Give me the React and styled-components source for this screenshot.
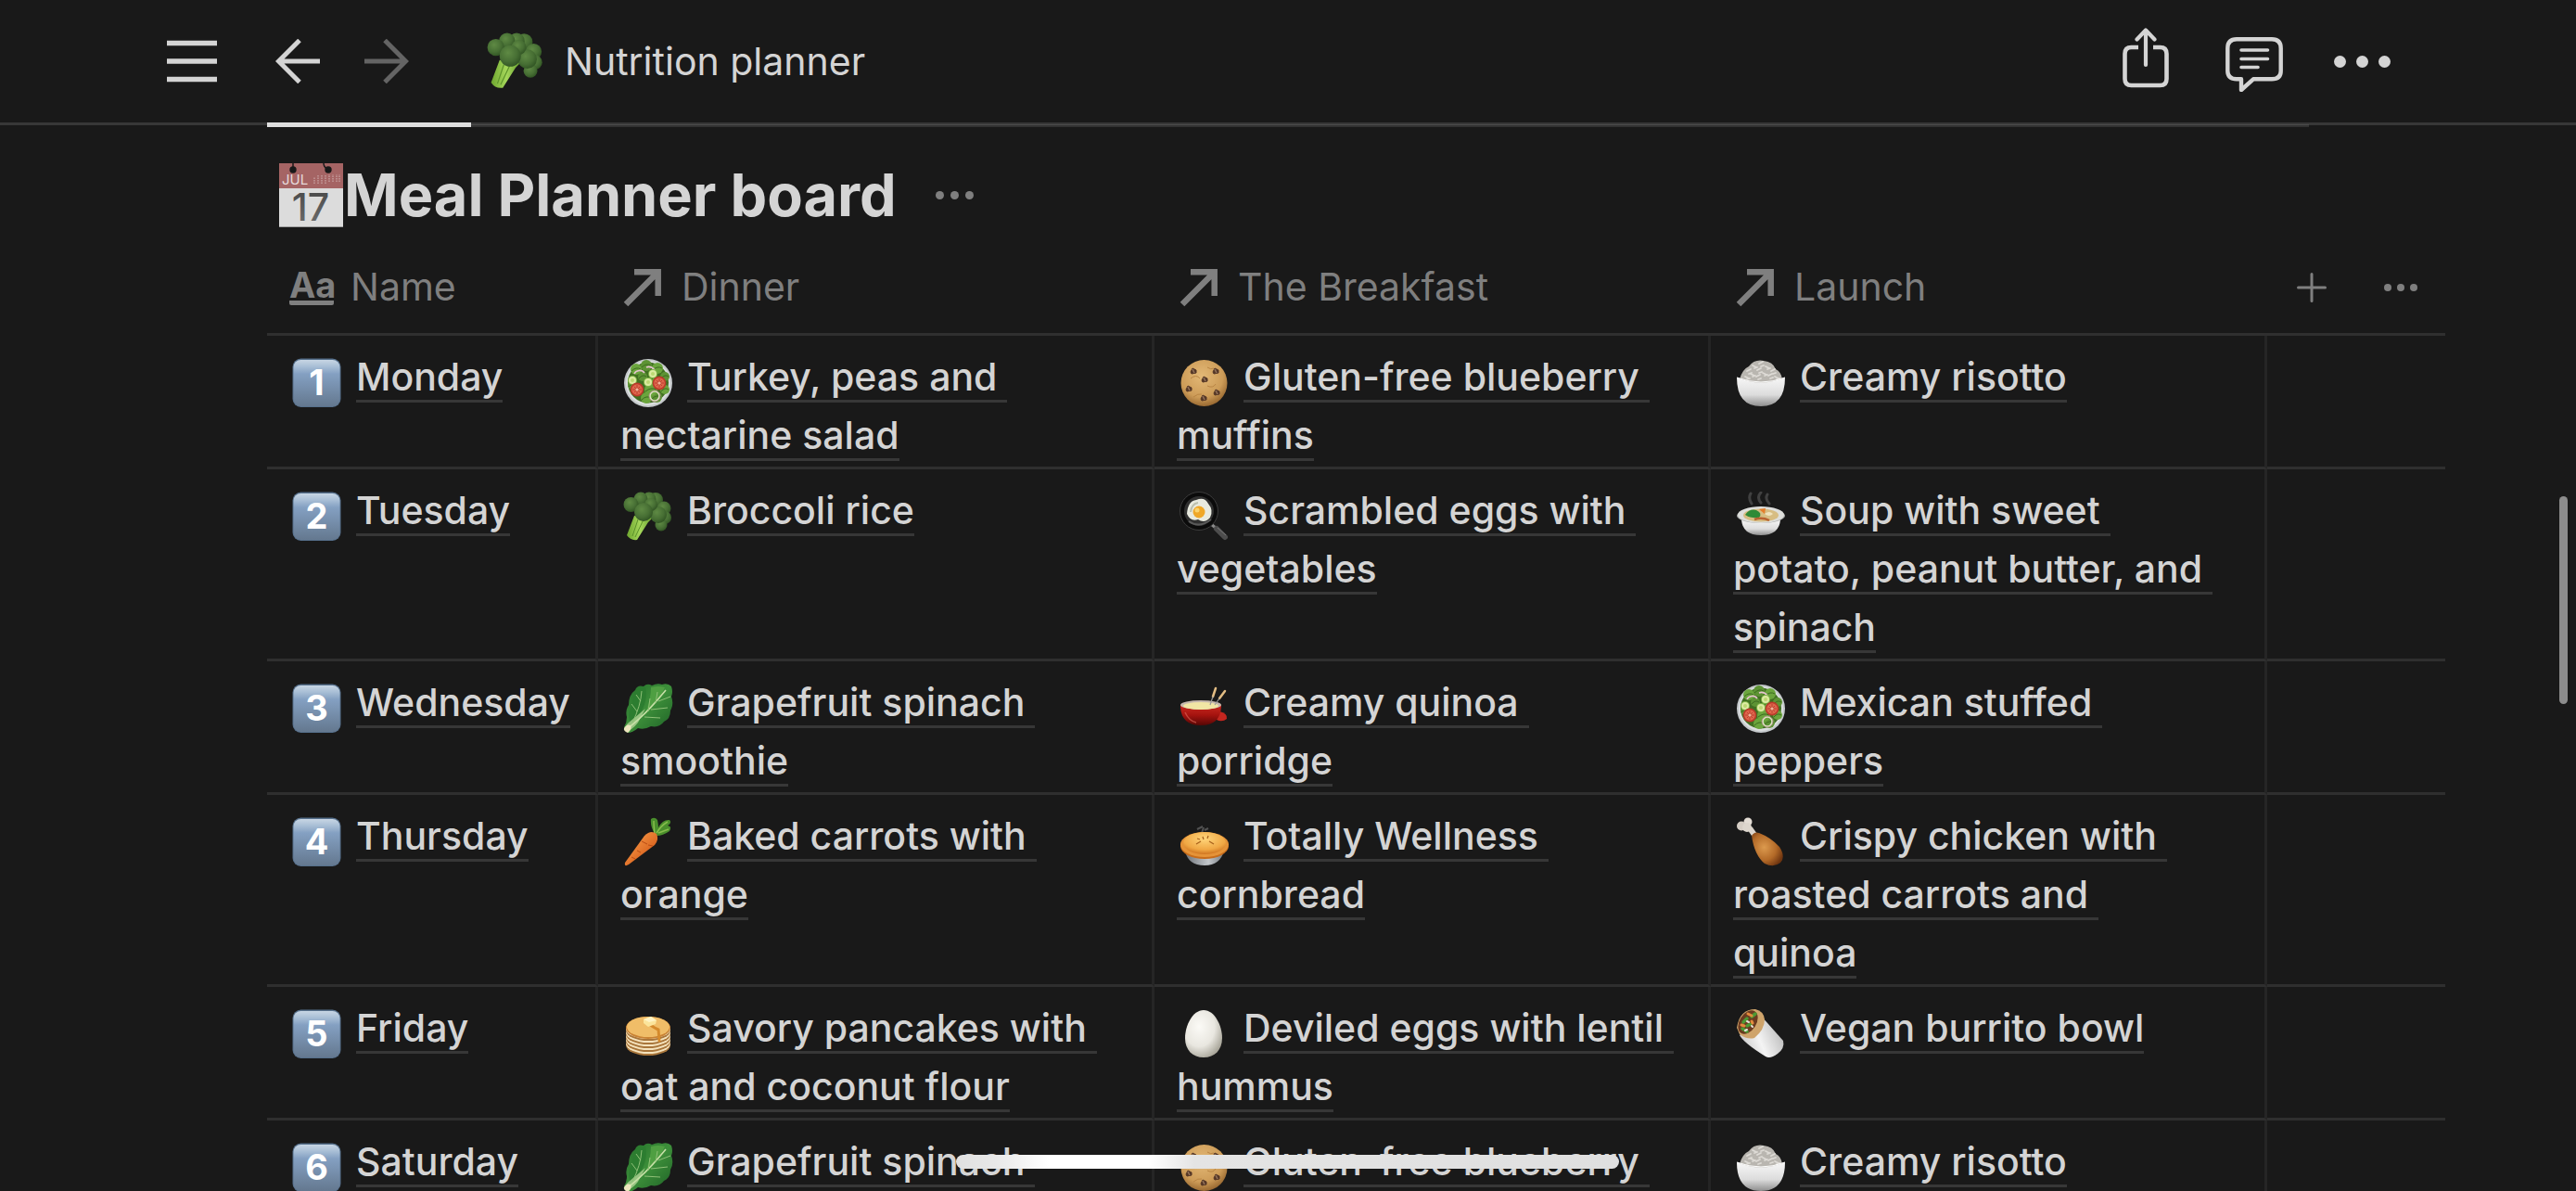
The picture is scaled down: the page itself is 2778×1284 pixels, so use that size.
import React from "react";
import styled, { createGlobalStyle } from "styled-components";

const GlobalStyle = createGlobalStyle`
  * { box-sizing: border-box; }
  html, body { margin: 0; padding: 0; background: #191919; }
`;

const Screen = styled.div`
  position: relative;
  display: flex;
  flex-direction: column;
  height: 100vh;
  overflow: hidden;
  background: #191919;
  color: #d4d4d4;
  font-family: Inter, "Liberation Sans", sans-serif;
  font-size: 41px;
  line-height: 63px;
`;

/* ---------- top bar ---------- */

const TopBar = styled.header`
  position: relative;
  flex: none;
  display: flex;
  align-items: center;
  justify-content: space-between;
  height: 135px;
  padding: 0 172px 0 171px;
  border-bottom: 3px solid #373737;
`;

const BarGroup = styled.div`
  display: flex;
  align-items: center;
`;

const IconButton = styled.button`
  display: flex;
  align-items: center;
  justify-content: center;
  width: ${(p) => p.$width || 72}px;
  height: 96px;
  padding: 0;
  border: 0;
  background: none;
  color: ${(p) => p.$color || "#d4d4d4"};
`;

const NavButtons = styled.nav`
  display: flex;
  gap: 24px;
  margin-left: 42px;
`;

const PageLink = styled.a`
  display: flex;
  align-items: center;
  gap: 22px;
  margin-left: 72px;
  color: inherit;
  text-decoration: none;
`;

const ScrollTrack = styled.div`
  position: absolute;
  left: 288px;
  right: 288px;
  bottom: -5px;
  height: 3px;
  background: rgba(255, 255, 255, 0.11);
`;

const ScrollThumb = styled.div`
  position: absolute;
  left: 0;
  bottom: 0;
  width: 10%;
  height: 5px;
  background: #dedede;
`;

/* ---------- board ---------- */

const Content = styled.main`
  flex: 1;
  min-height: 0;
  overflow: hidden;
  padding: 25px 141px 0 288px;
`;

const TitleRow = styled.div`
  display: flex;
  align-items: center;
  height: 100px;
  padding-left: 12px;
`;

const Title = styled.h2`
  display: flex;
  align-items: center;
  margin: 0;
  font-size: 63px;
  line-height: 96px;
  font-weight: 700;
`;

const Board = styled.table`
  width: 100%;
  table-layout: fixed;
  border-collapse: separate;
  border-spacing: 0;
`;

const HeadCell = styled.th`
  height: 102px;
  padding: 0 0 0 24px;
  border-bottom: 3px solid #2f2f2f;
  color: #7f7f7f;
  font-weight: 400;
  text-align: left;
  vertical-align: middle;
`;

const HeadLabel = styled.div`
  display: flex;
  align-items: center;
  gap: 18px;
`;

const HeadActions = styled.div`
  display: flex;
  gap: 36px;
`;

const TypeGlyph = styled.span`
  width: 48px;
  height: 39px;
  border-bottom: 5px solid currentColor;
  border-radius: 2px;
  font-size: 38px;
  line-height: 34px;
  font-weight: 700;
  text-align: center;
`;

const Cell = styled.td`
  padding: 13px 48px 2px 24px;
  border-bottom: 3px solid #2f2f2f;
  border-right: ${(p) => (p.$last ? "0" : "3px solid #252525")};
  vertical-align: top;
  white-space: pre-wrap;
`;

const NameCell = styled(Cell)`
  padding-right: 0;
`;

const ItemLink = styled.a`
  border-bottom: 3px solid #373737;
  color: inherit;
  font-weight: 500;
  text-decoration: none;
`;

const CellIcon = styled.svg`
  display: inline-block;
  width: 54px;
  height: 54px;
  margin: 0 15px -19px 3px;
`;

const PageIcon = styled.svg`
  width: 62px;
  height: 62px;
`;

/* ---------- overlays ---------- */

const PageScrollbar = styled.div`
  position: absolute;
  right: 9px;
  top: 535px;
  width: 9px;
  height: 224px;
  border-radius: 5px;
  background: #8c8c8c;
`;

const HomeIndicator = styled.div`
  position: absolute;
  left: 50%;
  bottom: 24px;
  width: 715px;
  height: 15px;
  margin-left: -358px;
  border-radius: 8px;
  background: linear-gradient(90deg, #e0e0e0 0%, #e8e8e8 6%, #ffffff 14%, #ffffff 29%, #e4e4e4 36%, #dfdfdf 100%);
`;

/* ---------- emoji drawings ---------- */

const Defs = styled.svg`
  position: absolute;
  width: 0;
  height: 0;
`;

const Gradients = () => (
  <Defs aria-hidden="true">
    <defs>
      <linearGradient id="key" x1="0" y1="0" x2="0" y2="1">
        <stop offset="0" stopColor="#c8d6e4" />
        <stop offset="0.14" stopColor="#a9bfd6" />
        <stop offset="0.3" stopColor="#84a0c2" />
        <stop offset="1" stopColor="#64788f" />
      </linearGradient>
      <radialGradient id="floret" cx="0.4" cy="0.35" r="0.7">
        <stop offset="0" stopColor="#5f8a44" />
        <stop offset="0.6" stopColor="#476f34" />
        <stop offset="1" stopColor="#2f5222" />
      </radialGradient>
      <linearGradient id="stem" x1="0" y1="0" x2="1" y2="0">
        <stop offset="0" stopColor="#6ea62f" />
        <stop offset="0.5" stopColor="#a5d75a" />
        <stop offset="1" stopColor="#5f9a2b" />
      </linearGradient>
      <radialGradient id="cookie" cx="0.45" cy="0.35" r="0.65">
        <stop offset="0" stopColor="#e3b876" />
        <stop offset="0.7" stopColor="#cd9c58" />
        <stop offset="1" stopColor="#9a6a32" />
      </radialGradient>
      <linearGradient id="bowl" x1="0" y1="0" x2="0" y2="1">
        <stop offset="0" stopColor="#f7f7f7" />
        <stop offset="0.6" stopColor="#dcdcdc" />
        <stop offset="1" stopColor="#8e8e8e" />
      </linearGradient>
      <linearGradient id="leaf" x1="0" y1="0" x2="1" y2="1">
        <stop offset="0" stopColor="#246f2b" />
        <stop offset="0.5" stopColor="#3d8f3a" />
        <stop offset="1" stopColor="#1c5f25" />
      </linearGradient>
      <linearGradient id="pot" x1="0" y1="0" x2="0" y2="1">
        <stop offset="0" stopColor="#c92a20" />
        <stop offset="0.5" stopColor="#a5130f" />
        <stop offset="1" stopColor="#560705" />
      </linearGradient>
      <linearGradient id="carrot" x1="0" y1="0" x2="1" y2="1">
        <stop offset="0.3" stopColor="#f08b3c" />
        <stop offset="0.75" stopColor="#d65f1c" />
      </linearGradient>
      <radialGradient id="crust" cx="0.5" cy="0.3" r="0.7">
        <stop offset="0" stopColor="#ffd57a" />
        <stop offset="0.7" stopColor="#f0a844" />
        <stop offset="1" stopColor="#cf7420" />
      </radialGradient>
      <linearGradient id="tin" x1="0" y1="0" x2="1" y2="0">
        <stop offset="0" stopColor="#6d7278" />
        <stop offset="0.6" stopColor="#c3c7cb" />
        <stop offset="1" stopColor="#74797e" />
      </linearGradient>
      <radialGradient id="egg" cx="0.38" cy="0.35" r="0.7">
        <stop offset="0" stopColor="#fbfaf6" />
        <stop offset="0.6" stopColor="#e9e7e0" />
        <stop offset="1" stopColor="#a9a69a" />
      </radialGradient>
      <radialGradient id="meat" cx="0.4" cy="0.45" r="0.65">
        <stop offset="0" stopColor="#dc9a4e" />
        <stop offset="0.6" stopColor="#b36a28" />
        <stop offset="1" stopColor="#6f3510" />
      </radialGradient>
      <linearGradient id="wrap" x1="0" y1="0.6" x2="1" y2="0.2">
        <stop offset="0" stopColor="#c9c9c9" />
        <stop offset="0.4" stopColor="#f4f4f4" />
        <stop offset="1" stopColor="#b2b2b2" />
      </linearGradient>
      <linearGradient id="numeral" x1="0" y1="0" x2="0" y2="1">
        <stop offset="0" stopColor="#444444" />
        <stop offset="1" stopColor="#707070" />
      </linearGradient>
    </defs>
  </Defs>
);

const Broccoli = () => (
  <g>
    <path d="M12 26 L4 47 Q8 53 15 52 L27 33 L33 27 Z" fill="url(#stem)" />
    <path d="M16 30 L10 48 M22 30 L13 49" stroke="#5b922a" strokeWidth="1" />
    <circle cx="35" cy="9" r="8" fill="url(#floret)" />
    <circle cx="28" cy="8" r="7.5" fill="url(#floret)" />
    <circle cx="19" cy="8" r="7.5" fill="url(#floret)" />
    <circle cx="44" cy="18" r="7.5" fill="url(#floret)" />
    <circle cx="45" cy="28" r="7" fill="url(#floret)" />
    <circle cx="41" cy="36" r="6.5" fill="url(#floret)" />
    <circle cx="38" cy="25" r="9" fill="url(#floret)" />
    <circle cx="30" cy="14" r="7" fill="url(#floret)" />
    <circle cx="8.500" cy="14" r="8" fill="url(#floret)" />
    <circle cx="22" cy="22" r="10" fill="url(#floret)" />
  </g>
);

const Tomato = ({ x, y }) => (
  <g transform={`translate(${x} ${y})`}>
    <circle r="7.4" fill="#b93a2a" />
    <circle r="5.8" fill="#e0654c" />
    <path d="M0 -5 V5 M-5 0 H5 M-3 -3 L3 3 M3 -3 L-3 3" stroke="#b94331" strokeWidth="1" />
    <circle r="1.6" fill="#f0b49b" />
  </g>
);

const Salad = () => (
  <g>
    <circle cx="27" cy="27" r="26" fill="#c5c9cb" />
    <circle cx="27" cy="27" r="24" fill="#dcdfdf" />
    <circle cx="27" cy="26.500" r="22" fill="#416f22" />
    {[[14, 12, 6], [25, 8, 6], [37, 11, 6], [45, 20, 5], [45, 34, 5], [36, 42, 6], [25, 43, 6], [10, 29, 5], [30, 34, 7], [21, 20, 5], [33, 22, 4]].map(([x, y, r], i) => (
      <g key={i}>
        <circle cx={x} cy={y} r={r} fill={i % 2 ? "#5d9334" : "#6ba53d"} />
        <path d={`M${x - r + 1} ${y + 2} Q${x} ${y - 3} ${x + r - 1} ${y}`} stroke="#3d6b20" fill="none" strokeWidth="1" />
      </g>
    ))}
    <path d="M12 17 A6 5 0 0 1 23 16" fill="none" stroke="#e6c3cf" strokeWidth="1.600" />
    <path d="M25 10 Q30 8 34 13" fill="none" stroke="#e6c3cf" strokeWidth="1.600" />
    {[[10, 24], [27, 26], [32, 17]].map(([x, y]) => (
      <g key={x}>
        <circle cx={x} cy={y} r="5" fill="#7fb547" />
        <circle cx={x} cy={y} r="4" fill="#dceba2" />
        <circle cx={x} cy={y} r="2" fill="#bcd873" />
      </g>
    ))}
    <Tomato x={15} y={34} />
    <Tomato x={39} y={27} />
    <circle cx="34" cy="41" r="5" fill="none" stroke="#dfe3c4" strokeWidth="1.600" />
    <circle cx="34" cy="41" r="6" fill="none" stroke="#c98ba3" strokeWidth="0.6" />
  </g>
);

const Cookie = () => (
  <g>
    <circle cx="26.500" cy="27" r="25" fill="url(#cookie)" />
    <path d="M12 22 q6 -5 10 0 M30 30 q6 3 9 -2 M15 42 q5 -4 9 -3 M30 10 q4 3 7 1" stroke="#b98544" strokeWidth="1" fill="none" />
    {[[15, 14], [39, 14], [27, 23], [10, 33], [40, 37], [26, 43]].map(([x, y]) => (
      <g key={`${x}-${y}`}>
        <path d={`M${x - 3} ${y + 1} L${x - 1} ${y - 3} L${x + 3} ${y - 1} L${x + 3} ${y + 2} L${x - 2} ${y + 3} Z`} fill="#553726" strokeLinejoin="round" stroke="#553726" />
        <path d={`M${x - 1} ${y - 2} L${x + 1} ${y + 2}`} stroke="#93725a" strokeWidth="1.5" />
      </g>
    ))}
  </g>
);

const Pan = () => (
  <g>
    <path d="M34 35 L40 40" stroke="#8a8a8a" strokeWidth="3" />
    <path d="M40 40 L49 49" stroke="#4d4d4d" strokeWidth="6" strokeLinecap="round" />
    <path d="M41 39 L50 47" stroke="#787878" strokeWidth="1" />
    <circle cx="21" cy="21" r="20.500" fill="#0b0b0b" stroke="#3c3c3c" strokeWidth="1" />
    <circle cx="21" cy="21" r="16" fill="#303030" />
    <path d="M10 32 Q21 40 34 30" fill="none" stroke="#5a5a5a" strokeWidth="2" />
    <path d="M8 24 Q9 10 18 9 Q27 5 31 13 Q37 20 33 28 Q27 35 20 30 Q12 33 8 24 Z" fill="#e8eadf" />
    <path d="M12 22 Q13 13 20 12" stroke="#bcc0ae" fill="none" strokeWidth="2" />
    <circle cx="21" cy="22" r="6.500" fill="#efa727" />
    <circle cx="19" cy="20" r="2.500" fill="#fbd36c" />
  </g>
);

const Fondue = () => (
  <g>
    <path d="M43 30 Q52 32 51 38 Q46 42 40 39 Z" fill="#c3261f" />
    <path d="M1 23 Q1 45 23 45 Q45 45 45 23 Z" fill="url(#pot)" />
    <ellipse cx="23" cy="23" rx="22" ry="5" fill="#c7b9ae" />
    <ellipse cx="23" cy="24" rx="19" ry="4" fill="#f1e6a4" />
    <path d="M39 5 L36 14 M49 8 L43 16" stroke="#e3bd84" strokeWidth="2.500" strokeLinecap="round" />
    <path d="M36 14 L33 23 M43 16 L38 23" stroke="#9a9a9a" strokeWidth="1.200" />
    <path d="M6 31 Q10 40 18 42" stroke="#e0695c" strokeWidth="1.500" fill="none" opacity="0.6" />
  </g>
);

const Rice = () => (
  <g>
    <path d="M4 23 Q7 12 14 9 Q20 1 30 3 Q40 4 43 12 Q49 15 50 23 Q27 34 4 23 Z" fill="#b9b6b0" />
    {[[14, 14], [20, 8], [27, 6], [34, 9], [40, 14], [18, 17], [25, 13], [31, 16], [37, 19], [12, 20], [24, 20], [44, 20]].map(([x, y], i) => (
      <path key={i} d={`M${x - 2} ${y} l4 ${i % 2 ? 2 : -2} M${x} ${y + 3} l3 -1`} stroke="#dedbd6" strokeWidth="1.800" strokeLinecap="round" />
    ))}
    <path d="M1 21 Q27 32 53 21 Q53 52 27 52 Q1 52 1 21 Z" fill="url(#bowl)" />
    <path d="M1 21 Q27 31 53 21" stroke="#ffffff" strokeWidth="1" fill="none" />
  </g>
);

const Soup = () => (
  <g>
    <path d="M17 13 Q13 7 16 2 M27 12 Q22 6 27 1 M36 13 Q31 8 34 3" stroke="#8d8d8d" strokeWidth="3" fill="none" strokeLinecap="round" opacity="0.35" />
    <path d="M6 30 Q7 47 27 47 Q47 47 48 30 Z" fill="url(#bowl)" />
    <ellipse cx="27" cy="26" rx="26" ry="8" fill="#aeb0ae" />
    <ellipse cx="27" cy="25" rx="25" ry="9" fill="#dedfdc" />
    <ellipse cx="27" cy="25.500" rx="19" ry="7" fill="#d7bd82" />
    <path d="M10 25 Q15 18 22 20 Q29 23 25 28 Q16 29 10 25 Z" fill="#2f8a36" />
    <path d="M25 19 L32 18 L31 24 Z" fill="#e57e2b" />
    <path d="M31 24 q5 -4 9 0 q-4 4 -9 0" fill="#f0e3bd" />
    <path d="M20 30 q8 -3 16 1" stroke="#b96331" strokeWidth="2.500" fill="none" />
  </g>
);

const Greens = () => (
  <g>
    <path d="M1 47 Q4 42 4 36 Q2 29 6 23 Q6 12 13 7 Q15 1 22 3 Q26 -1 31 2 Q37 -1 42 1 Q48 -1 52 3 Q54 9 52 14 Q55 22 51 29 Q51 38 44 41 Q39 48 30 46 Q23 50 16 48 Q10 53 5 53 Z" fill="url(#leaf)" />
    <path d="M24 4 Q27 18 19 31 L8 43 Q4 34 9 23 Q11 11 16 5 Q21 2 24 4 Z" fill="#2c7d30" />
    <path d="M30 4 Q38 2 45 4 Q37 22 23 34 Q30 18 30 4 Z" fill="#4f9f42" />
    <path d="M3 51 Q1 46 6 42 L24 27 L16 42 Q9 51 3 51 Z" fill="#b7d79b" opacity="0.75" />
    <path d="M4 49 Q24 34 46 7" stroke="#c8e0a8" strokeWidth="1.600" fill="none" />
    <path d="M10 42 Q19 24 20 8 M15 30 L9 22 M19 19 L14 12 M27 30 L29 16 M35 21 L37 9 M23 36 L40 37 M30 28 L48 26 M38 19 L51 14" stroke="#8fc077" strokeWidth="1" fill="none" />
    <path d="M1 48 Q4 43 8 45 Q10 49 5 53 Q0 51 1 48 Z" fill="#ece6bd" />
  </g>
);

const Carrot = () => (
  <g>
    <path d="M34 18 Q29 9 30 2 Q34 -1 37 3 Q38 8 38 11 Q43 2 50 3 Q53 6 48 9 Q53 10 50 15 Q43 20 36 20 Z" fill="#4a8f2c" />
    <path d="M34 18 Q33 9 33 4 M36 17 Q41 9 48 5 M38 17 L49 13" stroke="#88bd4d" strokeWidth="1.500" fill="none" />
    <path d="M23 20 Q30 13 36 18 Q39 24 34 30 L6 51 Q1 54 2 49 Z" fill="url(#carrot)" />
    <path d="M20 26 l6 3 M15 36 l4 2 M27 30 l5 1 M9 43 l4 2" stroke="#b94c13" strokeWidth="1" />
  </g>
);

const Pancakes = () => (
  <g>
    {[44, 40, 36, 32, 28].map((y) => (
      <g key={y}>
        <ellipse cx="27" cy={y - 5} rx="24" ry="11" fill="#a9763b" />
        <ellipse cx="27" cy={y - 7} rx="24" ry="11" fill="#f5e3bd" />
      </g>
    ))}
    <ellipse cx="27" cy="20" rx="24" ry="12" fill="#c98335" />
    <ellipse cx="27" cy="19" rx="23" ry="11" fill="#f0bd68" />
    <path d="M28 16 Q35 21 38 22 L39 34" stroke="#d58a2c" strokeWidth="3" fill="none" strokeLinecap="round" />
    <path d="M22 11 L30 8 L36 12 L35 16 L27 19 L22 15 Z" fill="#fbe49b" />
    <path d="M22 11 L28 14 L36 12 L30 8 Z" fill="#fff3c4" />
  </g>
);

const Pie = () => (
  <g>
    <path d="M19 13 L25 10 M27 14 L31 12 M24 17 L26 11" stroke="#777777" strokeWidth="2" opacity="0.6" />
    <path d="M6 36 Q9 52 27 52 Q44 52 48 36 Z" fill="url(#tin)" />
    <ellipse cx="27" cy="31" rx="26" ry="14" fill="#c76c1b" />
    <ellipse cx="27" cy="29.500" rx="26" ry="13.500" fill="#e59338" />
    <ellipse cx="27" cy="28" rx="23" ry="12" fill="url(#crust)" />
    <path d="M18 29 L23 26 M32 26 L37 29 M25 21 L26 24 M31 20 L30 23 M19 23 L22 24" stroke="#a8611c" strokeWidth="1.300" />
  </g>
);

const Egg = () => <path d="M26 1 C38 1 46 18 46 31 C46 44 38 52 26 52 C14 52 6 44 6 31 C6 18 14 1 26 1 Z" fill="url(#egg)" />;

const Drumstick = () => (
  <g>
    <path d="M15 12 L20 19" stroke="#dcd5cc" strokeWidth="6" />
    <circle cx="13" cy="5" r="4.500" fill="#e4ddd5" />
    <circle cx="6" cy="9.500" r="5" fill="#d5cdc4" />
    <circle cx="12" cy="11" r="5" fill="#ddd6cd" />
    <path d="M17 20 Q20 15 25 17 Q38 22 47 32 Q54 43 48 49 Q41 55 31 50 Q20 41 17 20 Z" fill="url(#meat)" />
  </g>
);

const Burrito = () => (
  <g>
    <path d="M4 28 Q8 36 32 51 Q37 54 45 48 Q53 42 51 34 L27 7 Z" fill="url(#wrap)" />
    <path d="M1 20 Q4 0 21 0 Q30 2 31 11 Q31 22 20 31 Q12 33 4 27 Z" fill="#cfa46b" />
    <ellipse cx="13" cy="14" rx="9" ry="14" transform="rotate(32 13 14)" fill="#6b3b20" />
    <path d="M7 21 l5 3 M8 14 l4 -4 M17 8 l4 -3 M12 18 l4 -2" stroke="#4d9a34" strokeWidth="3.500" strokeLinecap="round" />
    <path d="M13 5 l4 2 M6 17 l3 1 M17 13 l1 2" stroke="#e38a3c" strokeWidth="3" strokeLinecap="round" />
    <path d="M12 13 l2 1 M10 23 l2 -1 M17 18 l1 1" stroke="#e9e4d8" strokeWidth="2" strokeLinecap="round" />
  </g>
);

const Keycap = ({ digit }) => (
  <g>
    <rect x="0.500" y="0.500" width="52" height="52.500" rx="9" fill="#56708c" />
    <rect x="1.500" y="2" width="50" height="50" rx="8" fill="url(#key)" />
    <text x="26.500" y="40" textAnchor="middle" fontFamily="Inter, sans-serif" fontSize="38" fontWeight="700" fill="#ffffff">
      {digit}
    </text>
  </g>
);

const drawings = {
  broccoli: Broccoli, salad: Salad, cookie: Cookie, pan: Pan, fondue: Fondue, rice: Rice, soup: Soup,
  greens: Greens, carrot: Carrot, pancakes: Pancakes, pie: Pie, egg: Egg, drumstick: Drumstick, burrito: Burrito,
};

const CalendarIcon = () => (
  <svg width="71" height="69" viewBox="0 0 71 69" overflow="visible" aria-hidden="true">
    <rect x="1" y="0" width="69" height="69" fill="#dcdcdc" />
    <rect x="1" y="0" width="69" height="27" fill="#a56464" />
    <path d="M1 68.500 H70" stroke="#a0a0a0" />
    <circle cx="16" cy="7" r="3.700" fill="#191919" />
    <circle cx="54" cy="7" r="3.700" fill="#191919" />
    <path d="M16 0 V6 M49 0 Q49 4 53 6" stroke="#191919" strokeWidth="1.500" fill="none" />
    <path d="M39 22 V15 M43 22 V13 M47 22 V12 M51 22 V12 M55 20 V12 M59 20 V12 M63 20 V12 M66 20 V12" stroke="#c49a9a" strokeWidth="1.500" strokeDasharray="1.500 1" />
    <text x="4" y="23" fontFamily="Inter, sans-serif" fontSize="15" fontWeight="400" fill="#e6dada">JUL</text>
    <text x="35" y="62" textAnchor="middle" fontFamily="Inter, sans-serif" fontSize="41" fontWeight="500" fill="url(#numeral)">17</text>
  </svg>
);

/* ---------- line icons ---------- */

const MenuIcon = () => (
  <svg width="54" height="48" viewBox="0 0 54 48" fill="none" stroke="currentColor" strokeWidth="5.500">
    <path d="M0 4.500 H54 M0 24 H54 M0 43.500 H54" />
  </svg>
);

const BackIcon = () => (
  <svg width="48" height="48" viewBox="0 0 48 48" fill="none" stroke="currentColor" strokeWidth="5">
    <path d="M48 24 H3 M26 1.500 L3.500 24 L26 46.500" />
  </svg>
);

const ForwardIcon = () => (
  <svg width="48" height="48" viewBox="0 0 48 48" fill="none" stroke="currentColor" strokeWidth="5">
    <path d="M0 24 H45 M22 1.500 L44.500 24 L22 46.500" />
  </svg>
);

const ShareIcon = () => (
  <svg width="50" height="72" viewBox="0 0 50 72" fill="none" stroke="currentColor" strokeWidth="4.600">
    <path d="M17 21 H9.500 Q2.500 21 2.500 28 V55 Q2.500 62 9.500 62 H40.500 Q47.500 62 47.500 55 V28 Q47.500 21 40.500 21 H33" />
    <path d="M25 40 V3 M15.500 12.500 L25 2.500 L34.500 12.500" strokeLinecap="round" strokeLinejoin="round" strokeWidth="4.200" />
  </svg>
);

const CommentIcon = () => (
  <svg width="62" height="66" viewBox="0 0 62 66" fill="none" stroke="currentColor" strokeLinejoin="round">
    <path d="M12 9.200 H50 Q59.700 9.200 59.700 19 V43.500 Q59.700 52.300 50 52.300 H30 L17 64 V52.300 H12 Q2.300 52.300 2.300 43.500 V19 Q2.300 9.200 12 9.200 Z" strokeWidth="4.400" />
    <path d="M17 21 H45.500 M17 30.500 H45.500 M17 39.500 H35" strokeWidth="3.600" strokeLinecap="round" />
  </svg>
);

const Dots = ({ gap, r }) => {
  const w = gap * 2 + r * 2;
  return (
    <svg width={w} height={r * 2} viewBox={`0 0 ${w} ${r * 2}`} fill="currentColor">
      <circle cx={r} cy={r} r={r} />
      <circle cx={r + gap} cy={r} r={r} />
      <circle cx={r + gap * 2} cy={r} r={r} />
    </svg>
  );
};

const RelationIcon = () => (
  <svg width="48" height="44" viewBox="0 0 48 44" fill="none" stroke="currentColor" strokeWidth="6.500">
    <path d="M6 40 L40 6 M15 5.200 H40.700 V31" />
  </svg>
);

const PlusIcon = () => (
  <svg width="32" height="32" viewBox="0 0 32 32" stroke="currentColor" strokeWidth="3" strokeLinecap="round">
    <path d="M16 1.500 V30.500 M1.500 16 H30.500" />
  </svg>
);

/* ---------- data ---------- */

const rows = [
  ["Monday", ["salad", "Turkey, peas and nectarine salad"], ["cookie", "Gluten-free blueberry muffins"], ["rice", "Creamy risotto"]],
  ["Tuesday", ["broccoli", "Broccoli rice"], ["pan", "Scrambled eggs with vegetables"], ["soup", "Soup with sweet potato, peanut butter, and spinach"]],
  ["Wednesday", ["greens", "Grapefruit spinach smoothie"], ["fondue", "Creamy quinoa porridge"], ["salad", "Mexican stuffed peppers"]],
  ["Thursday", ["carrot", "Baked carrots with orange"], ["pie", "Totally Wellness cornbread"], ["drumstick", "Crispy chicken with roasted carrots and quinoa"]],
  ["Friday", ["pancakes", "Savory pancakes with oat and coconut flour"], ["egg", "Deviled eggs with lentil hummus"], ["burrito", "Vegan burrito bowl"]],
  ["Saturday", ["greens", "Grapefruit spinach smoothie"], ["cookie", "Gluten-free blueberry muffins"], ["rice", "Creamy risotto"]],
];

const Meal = ({ icon, name }) => {
  const Drawing = drawings[icon];
  return (
    <Cell>
      <CellIcon viewBox="0 0 54 54" aria-hidden="true"><Drawing /></CellIcon>
      <ItemLink href="#">{name}</ItemLink>
    </Cell>
  );
};

const Column = styled.col`
  width: ${(p) => (p.$width ? `${p.$width}px` : "auto")};
`;

export default function App() {
  return (
    <Screen>
      <GlobalStyle />
      <Gradients />
      <TopBar>
        <BarGroup>
          <IconButton aria-label="Menu"><MenuIcon /></IconButton>
          <NavButtons>
            <IconButton aria-label="Back"><BackIcon /></IconButton>
            <IconButton aria-label="Forward" $color="#646464"><ForwardIcon /></IconButton>
          </NavButtons>
          <PageLink href="#">
            <PageIcon viewBox="0 0 54 54" aria-hidden="true"><Broccoli /></PageIcon>
            Nutrition planner
          </PageLink>
        </BarGroup>
        <BarGroup>
          <IconButton aria-label="Share" $width={117}><ShareIcon /></IconButton>
          <IconButton aria-label="Comments" $width={117}><CommentIcon /></IconButton>
          <IconButton aria-label="More" $width={117}><Dots gap={24} r={6.5} /></IconButton>
        </BarGroup>
        <ScrollTrack><ScrollThumb /></ScrollTrack>
      </TopBar>

      <Content>
        <TitleRow>
          <Title><CalendarIcon />Meal Planner board</Title>
          <IconButton aria-label="Board options" $width={126} $color="#7f7f7f"><Dots gap={16} r={4.5} /></IconButton>
        </TitleRow>
        <Board>
          <colgroup>
            <Column $width={357} />
            <Column $width={600} />
            <Column $width={600} />
            <Column $width={600} />
            <Column />
          </colgroup>
          <thead>
            <tr>
              <HeadCell scope="col"><HeadLabel><TypeGlyph aria-hidden="true">Aa</TypeGlyph>Name</HeadLabel></HeadCell>
              {["Dinner", "The Breakfast", "Launch"].map((label) => (
                <HeadCell scope="col" key={label}><HeadLabel><RelationIcon />{label}</HeadLabel></HeadCell>
              ))}
              <HeadCell scope="col">
                <HeadActions>
                  <IconButton aria-label="Add column" $width={48} $color="#7f7f7f"><PlusIcon /></IconButton>
                  <IconButton aria-label="Table options" $color="#7f7f7f"><Dots gap={14} r={4} /></IconButton>
                </HeadActions>
              </HeadCell>
            </tr>
          </thead>
          <tbody>
            {rows.map(([day, ...meals], i) => (
              <tr key={day}>
                <NameCell>
                  <CellIcon viewBox="0 0 54 54"><Keycap digit={i + 1} /></CellIcon>
                  <ItemLink href="#">{day}</ItemLink>
                </NameCell>
                {meals.map(([icon, name], j) => <Meal key={j} icon={icon} name={name} />)}
                <Cell $last />
              </tr>
            ))}
          </tbody>
        </Board>
      </Content>

      <PageScrollbar />
      <HomeIndicator />
    </Screen>
  );
}
